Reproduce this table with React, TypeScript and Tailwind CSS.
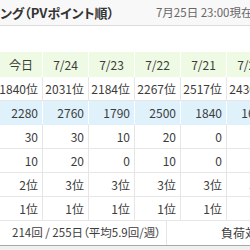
import React from "react";

const cols = ["今日", "7/24", "7/23", "7/22", "7/21", "7/20"];
const rows: { cells: string[]; bg: string }[] = [
  { cells: ["1840位", "2031位", "2184位", "2267位", "2517位", "2430位"], bg: "white" },
  { cells: ["2280", "2760", "1790", "2500", "1840", "1630"], bg: "blue" },
  { cells: ["30", "30", "10", "20", "0", "0"], bg: "white" },
  { cells: ["10", "20", "0", "10", "0", "0"], bg: "white" },
  { cells: ["2位", "3位", "3位", "3位", "3位", "3位"], bg: "white" },
  { cells: ["1位", "1位", "1位", "1位", "1位", "1位"], bg: "white" },
];

export default function App() {
  return (
    <div className="w-[250px] h-[250px] overflow-hidden bg-white text-[#3c3c3c] font-['Noto_Sans_CJK_JP','Noto_Sans',sans-serif] text-[12px] leading-none whitespace-nowrap [font-feature-settings:'palt']">
      <div className="h-[26px] bg-[#f8f8f8] border-b border-[#dcdcdc] flex items-center">
        <span className="shrink-0 font-bold text-[13px] text-[#333]">ング（PVポイント順）</span>
        <span className="shrink-0 ml-[42px] text-[11.5px] text-[#666]">7月25日 23:00現在時点</span>
      </div>
      <div className="h-[26px]" />
      <div className="w-[320px]">
        <div className="flex h-[25px] bg-[#eefae3]">
          {cols.map((c, i) => (
            <div
              key={c}
              className={`${i === 0 ? "w-[43px]" : "w-[46px]"} shrink-0 border-r border-white flex items-center justify-center`}
            >
              {c}
            </div>
          ))}
        </div>
        {rows.map((r, ri) => (
          <div
            key={ri}
            className={`flex h-[24px] border-b ${r.bg === "blue" ? "bg-[#dff1fb] border-[#dff1fb]" : "bg-white border-[#e6e6e6]"}`}
          >
            {r.cells.map((c, i) => (
              <div
                key={i}
                className={`${i === 0 ? "w-[43px]" : "w-[46px]"} shrink-0 border-r ${r.bg === "blue" ? "border-white" : "border-[#e6e6e6]"} flex items-center justify-end pr-[4px]`}
              >
                {c}
              </div>
            ))}
          </div>
        ))}
        <div className="flex h-[24px] bg-white">
          <div className="w-[167px] shrink-0 border-r border-[#e6e6e6] flex items-center justify-end pr-[5px] text-[11.5px]">
            214回 / 255日（平均5.9回/週）
          </div>
          <div className="flex items-center pl-[54px]">負荷対策中</div>
        </div>
      </div>
      <div className="h-[1px] bg-[#a8a8a8]" />
      <div className="h-[4px] bg-[#f0f0f0]" />
    </div>
  );
}
